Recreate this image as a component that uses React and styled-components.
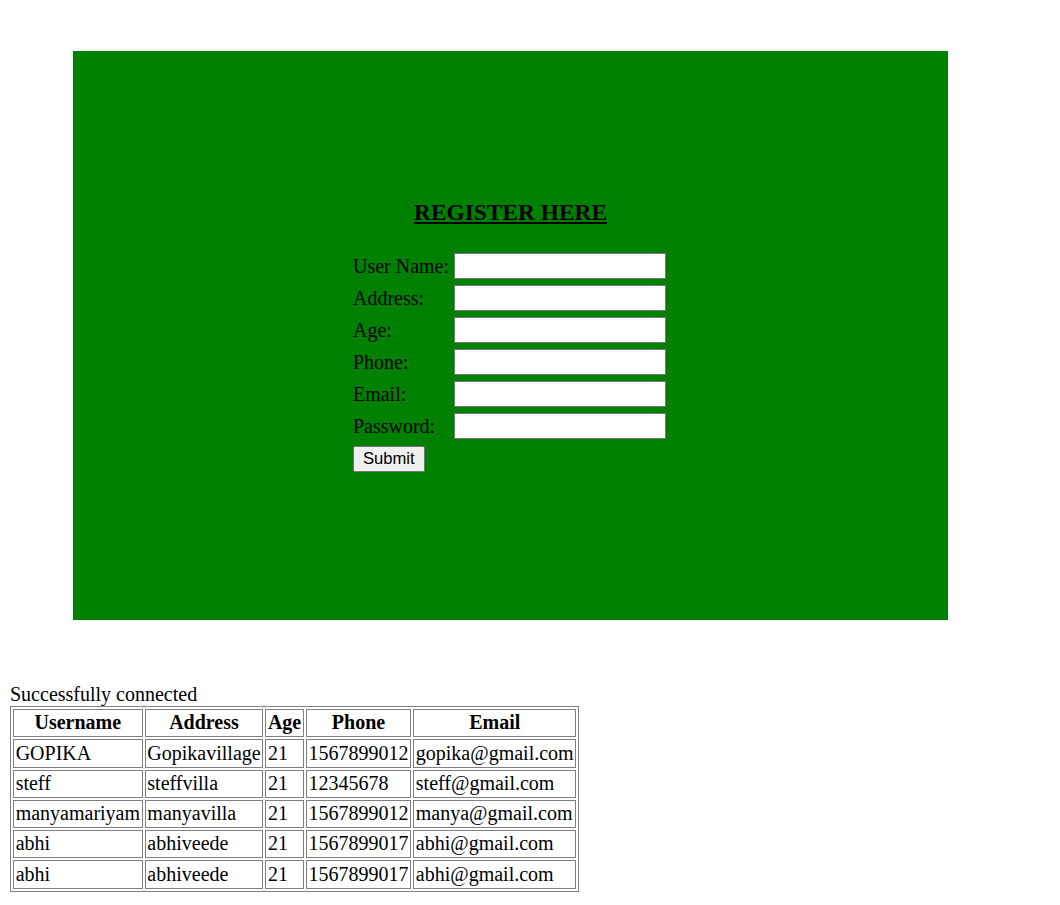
import styled, { createGlobalStyle } from "styled-components";

const GlobalStyle = createGlobalStyle`
  body {
    margin: 0;
    font-family: "Liberation Serif", "Times New Roman", serif;
    font-size: 20px;
    color: #000;
    background: #fff;
  }
`;

const Page = styled.div`
  padding: 10px;
`;

const Banner = styled.div`
  margin: 41px 0 0 63px;
  width: 875px;
  height: 569px;
  box-sizing: border-box;
  padding-top: 148px;
  background-color: #008000;
  display: flex;
  flex-direction: column;
  align-items: center;
`;

const Heading = styled.h3`
  margin: 0 0 27px;
  font-size: 23.4px;
  font-weight: bold;
  text-decoration: underline;
  line-height: 27px;
`;

const Form = styled.form`
  display: grid;
  grid-template-columns: auto 212px;
  column-gap: 5px;
  row-gap: 6px;
  align-items: center;
  margin-right: 2px;
`;

const Label = styled.label`
  line-height: 23px;
`;

const Input = styled.input`
  box-sizing: border-box;
  width: 212px;
  height: 26px;
  margin: 0;
  border: 1px solid #767676;
  background: #fff;
`;

const SubmitButton = styled.button`
  grid-column: 1;
  justify-self: start;
  margin-top: 1px;
  box-sizing: border-box;
  height: 26px;
  padding: 0 9px;
  font-family: "Liberation Sans", Arial, sans-serif;
  font-size: 16.6px;
  color: #000;
  background: #efefef;
  border: 1px solid #767676;
  border-radius: 2px;
`;

const Status = styled.div`
  margin-top: 63px;
  line-height: 23px;
`;

const Table = styled.table`
  border: 1px solid #808080;
  border-collapse: separate;
  border-spacing: 2.5px;
`;

const Th = styled.th`
  border: 1px solid #808080;
  padding: 1.25px 1.65px;
  line-height: 23.8px;
  font-weight: bold;
  text-align: center;
`;

const Td = styled.td`
  border: 1px solid #808080;
  padding: 1.25px 1.65px;
  line-height: 23.8px;
  text-align: left;
`;

const fields = ["User Name:", "Address:", "Age:", "Phone:", "Email:", "Password:"];

const rows = [
  ["GOPIKA", "Gopikavillage", "21", "1567899012", "gopika@gmail.com"],
  ["steff", "steffvilla", "21", "12345678", "steff@gmail.com"],
  ["manyamariyam", "manyavilla", "21", "1567899012", "manya@gmail.com"],
  ["abhi", "abhiveede", "21", "1567899017", "abhi@gmail.com"],
  ["abhi", "abhiveede", "21", "1567899017", "abhi@gmail.com"],
];

const App = () => {
  return (
    <Page>
      <GlobalStyle />
      <Banner>
        <Heading>REGISTER HERE</Heading>
        <Form onSubmit={(e) => e.preventDefault()}>
          {fields.map((f) => [
            <Label key={f + "-l"}>{f}</Label>,
            <Input key={f + "-i"} type={f === "Password:" ? "password" : "text"} />,
          ])}
          <SubmitButton type="submit">Submit</SubmitButton>
        </Form>
      </Banner>
      <Status>Successfully connected</Status>
      <Table>
        <thead>
          <tr>
            <Th>Username</Th>
            <Th>Address</Th>
            <Th>Age</Th>
            <Th>Phone</Th>
            <Th>Email</Th>
          </tr>
        </thead>
        <tbody>
          {rows.map((r, i) => (
            <tr key={i}>
              {r.map((c, j) => (
                <Td key={j}>{c}</Td>
              ))}
            </tr>
          ))}
        </tbody>
      </Table>
    </Page>
  );
};

export default App;
